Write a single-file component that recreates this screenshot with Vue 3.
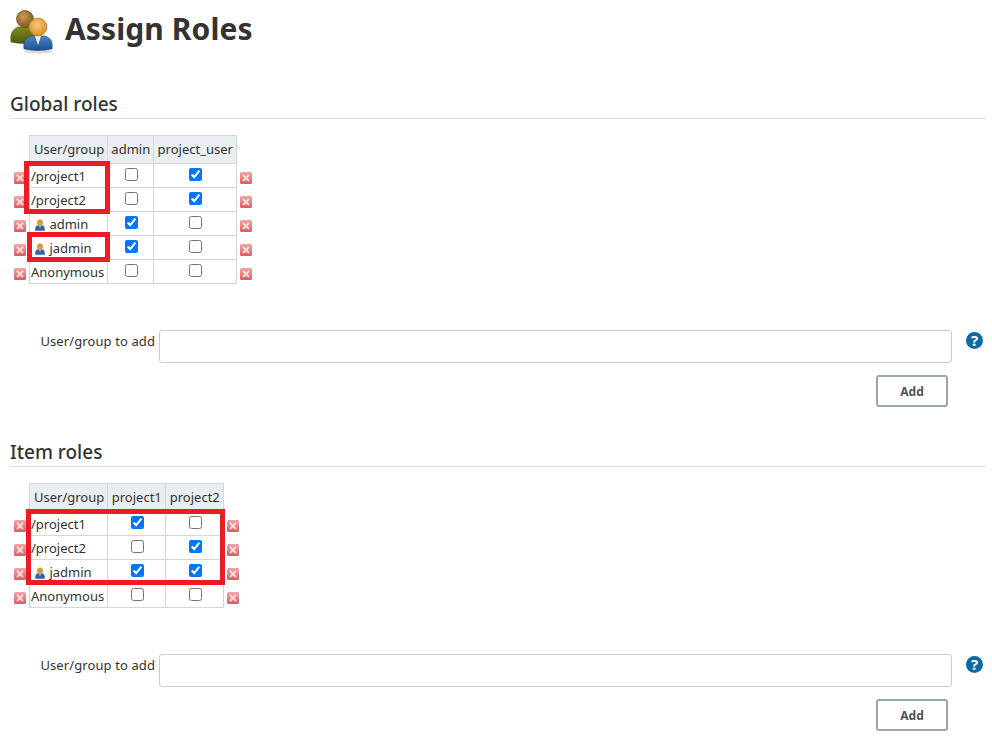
<template>
  <div class="page">
    <h1 class="title">
      <svg class="title-icon" width="48" height="48" viewBox="0 0 48 48">
        <defs>
          <radialGradient id="headA" cx="40%" cy="35%" r="70%">
            <stop offset="0" stop-color="#c89a55" />
            <stop offset="1" stop-color="#7d5518" />
          </radialGradient>
          <radialGradient id="headB" cx="45%" cy="40%" r="65%">
            <stop offset="0" stop-color="#f6ca80" />
            <stop offset="1" stop-color="#d18a22" />
          </radialGradient>
          <linearGradient id="bodyA" x1="0" y1="0" x2="0" y2="1">
            <stop offset="0" stop-color="#7f8a1c" />
            <stop offset="1" stop-color="#4c5a0c" />
          </linearGradient>
          <linearGradient id="bodyB" x1="0" y1="0" x2="0" y2="1">
            <stop offset="0" stop-color="#4d86c6" />
            <stop offset="1" stop-color="#1f4f8e" />
          </linearGradient>
          <linearGradient id="delFill" x1="0" y1="0" x2="0" y2="1">
            <stop offset="0" stop-color="#f3a6a8" />
            <stop offset="1" stop-color="#dc5a60" />
          </linearGradient>
        </defs>
        <path d="M1 36c-1-8 1-12 7-15h14c3 2 4 8 3 15q-12 3-24 0z" fill="url(#bodyA)" stroke="#4a560f" stroke-width=".6" />
        <circle cx="15" cy="13" r="8.500" fill="url(#headA)" stroke="#6f4a14" stroke-width=".7" />
        <ellipse cx="28" cy="45.500" rx="14" ry="2" fill="#000" opacity=".15" />
        <path d="M14 43c-1-7 1-11 7-13h14c6 2 8 6 7 13q-14 3-28 0z" fill="url(#bodyB)" stroke="#1d4a85" stroke-width=".6" />
        <path d="M25 30l3 9 3-9z" fill="#eef3f8" />
        <circle cx="28" cy="21" r="9" fill="url(#headB)" stroke="#bd7c1b" stroke-width=".7" />
      </svg>
      <span class="title-text">Assign Roles</span>
    </h1>

    <section v-for="section in sections" :key="section.title" class="section">
      <h2 class="section-title">{{ section.title }}</h2>

      <div class="table-wrap">
        <table class="roles">
          <thead>
            <tr>
              <th class="del-cell"></th>
              <th class="name-col">User/group</th>
              <th
                v-for="(col, i) in section.cols"
                :key="col"
                class="role-col"
                :style="{ width: section.widths[i] + 'px' }"
              >{{ col }}</th>
              <th class="del-cell"></th>
            </tr>
          </thead>
          <tbody>
            <tr v-for="row in section.rows" :key="row.name">
              <td class="del-cell">
                <svg class="del" width="12" height="12" viewBox="0 0 12 12">
                  <rect width="12" height="12" rx="1.500" fill="url(#delFill)" />
                  <path d="M3 3l6 6m0-6l-6 6" stroke="#f3dcdc" stroke-width="2" />
                </svg>
              </td>
              <td class="name-col">
                <svg v-if="row.user" class="user" width="10" height="12" viewBox="0 0 10 12">
                  <path d="M.3 11.700c-.5-3.400.7-5 2.700-5.500h4c2 .5 3.200 2.100 2.700 5.500z" fill="#2f62a5" />
                  <path d="M4 6.200l1 3 1-3z" fill="#dfe8f2" />
                  <circle cx="5" cy="3.400" r="3" fill="#dc9a3a" />
                </svg>
                {{ row.name }}
              </td>
              <td v-for="(on, i) in row.checks" :key="i" class="check-cell">
                <input type="checkbox" :checked="on" />
              </td>
              <td class="del-cell">
                <svg class="del" width="12" height="12" viewBox="0 0 12 12">
                  <rect width="12" height="12" rx="1.500" fill="url(#delFill)" />
                  <path d="M3 3l6 6m0-6l-6 6" stroke="#f3dcdc" stroke-width="2" />
                </svg>
              </td>
            </tr>
          </tbody>
        </table>
        <div
          v-for="(mark, i) in section.marks"
          :key="i"
          class="mark"
          :style="{ left: mark.x + 'px', top: mark.y + 'px', width: mark.w + 'px', height: mark.h + 'px' }"
        ></div>
      </div>

      <div class="add-row">
        <label class="add-label">User/group to add</label>
        <input class="add-input" type="text" />
        <span class="help">?</span>
      </div>
      <div class="add-actions">
        <button class="add-btn">Add</button>
      </div>
    </section>
  </div>
</template>

<script setup>
const sections = [
  {
    title: 'Global roles',
    cols: ['admin', 'project_user'],
    widths: [46, 83],
    rows: [
      { name: '/project1', checks: [false, true] },
      { name: '/project2', checks: [false, true] },
      { name: 'admin', user: true, checks: [true, false] },
      { name: 'jadmin', user: true, checks: [true, false] },
      { name: 'Anonymous', checks: [false, false] }
    ],
    marks: [
      { x: 14, y: 26, w: 86, h: 53 },
      { x: 17, y: 97, w: 83, h: 30 }
    ]
  },
  {
    title: 'Item roles',
    cols: ['project1', 'project2'],
    widths: [58, 58],
    rows: [
      { name: '/project1', checks: [true, false] },
      { name: '/project2', checks: [false, true] },
      { name: 'jadmin', user: true, checks: [true, true] },
      { name: 'Anonymous', checks: [false, false] }
    ],
    marks: [{ x: 16, y: 26, w: 199, h: 76 }]
  }
]
</script>

<style>
body { background: #fff; }
</style>

<style scoped>
.page { font-family: "Noto Sans", sans-serif; font-size: 13px; color: #333; padding: 6px 6px 0 10px; height: 734px; overflow: hidden; }

.title { display: flex; align-items: center; gap: 7px; margin: 0; height: 48px; font-size: 30px; font-weight: 700; color: #333; }
.title-icon { flex: none; }
.title-text { margin-bottom: 4px; letter-spacing: .1px; }

.section-title { margin: 0; font-size: 19px; font-weight: 500; line-height: 26px; padding-bottom: 1px; border-bottom: 1px solid #ddd; color: #333; }
.section:nth-of-type(1) .section-title { margin-top: 37px; }
.section:nth-of-type(2) .section-title { margin-top: 32px; }

.table-wrap { position: relative; margin-top: 16px; width: max-content; }
.roles { border-collapse: collapse; }
.roles th, .roles td { box-sizing: border-box; border: 1px solid #d3d7d9; height: 24px; padding: 0 3px; font-weight: 400; white-space: nowrap; line-height: 18px; }
.roles th { height: 28px; background: #e9eef0; text-align: left; padding-bottom: 2px; }
.roles th.role-col { padding: 0 0 2px; text-align: center; }
.roles .del-cell { border: none; background: none; width: 19px; }
.roles .del-cell:first-child { padding: 0 3px 0 4px; }
.roles .del-cell:last-child { padding: 0 4px 0 3px; }
.roles td.name-col { padding: 0 2px 0 1px; }
.roles th.name-col { padding: 0 3px 2px 4px; width: 78px; }
.check-cell { text-align: center; }
.check-cell input { margin: 0 0 4px 1px; width: 13px; height: 13px; vertical-align: middle; }
.del { display: block; margin-top: 4px; }
.user { vertical-align: -2px; margin: 0 1px 0 4px; }

.mark { position: absolute; border: 5px solid #ed1c24; box-sizing: border-box; pointer-events: none; }

.add-row { display: grid; grid-template-columns: 145px 793px auto; column-gap: 4px; margin-top: 46px; align-items: start; }
.add-label { text-align: right; line-height: 22px; letter-spacing: .1px; white-space: nowrap; }
.add-input { box-sizing: border-box; height: 33px; border: 1px solid #ccc; border-radius: 3px; background: #fff; }
.help { width: 17px; height: 17px; margin: 2px 0 0 10px; border-radius: 50%; background: #0b6aa2; color: #fff; font-size: 15px; font-weight: 700; line-height: 17px; text-align: center; }

.add-actions { display: flex; justify-content: flex-end; padding-right: 38px; margin-top: 12px; }
.add-btn { box-sizing: border-box; width: 72px; height: 32px; border: 2px solid #9aa7b0; border-radius: 3px; background: #fff; color: #4d545d; font-family: inherit; font-size: 12px; font-weight: 700; }
</style>
